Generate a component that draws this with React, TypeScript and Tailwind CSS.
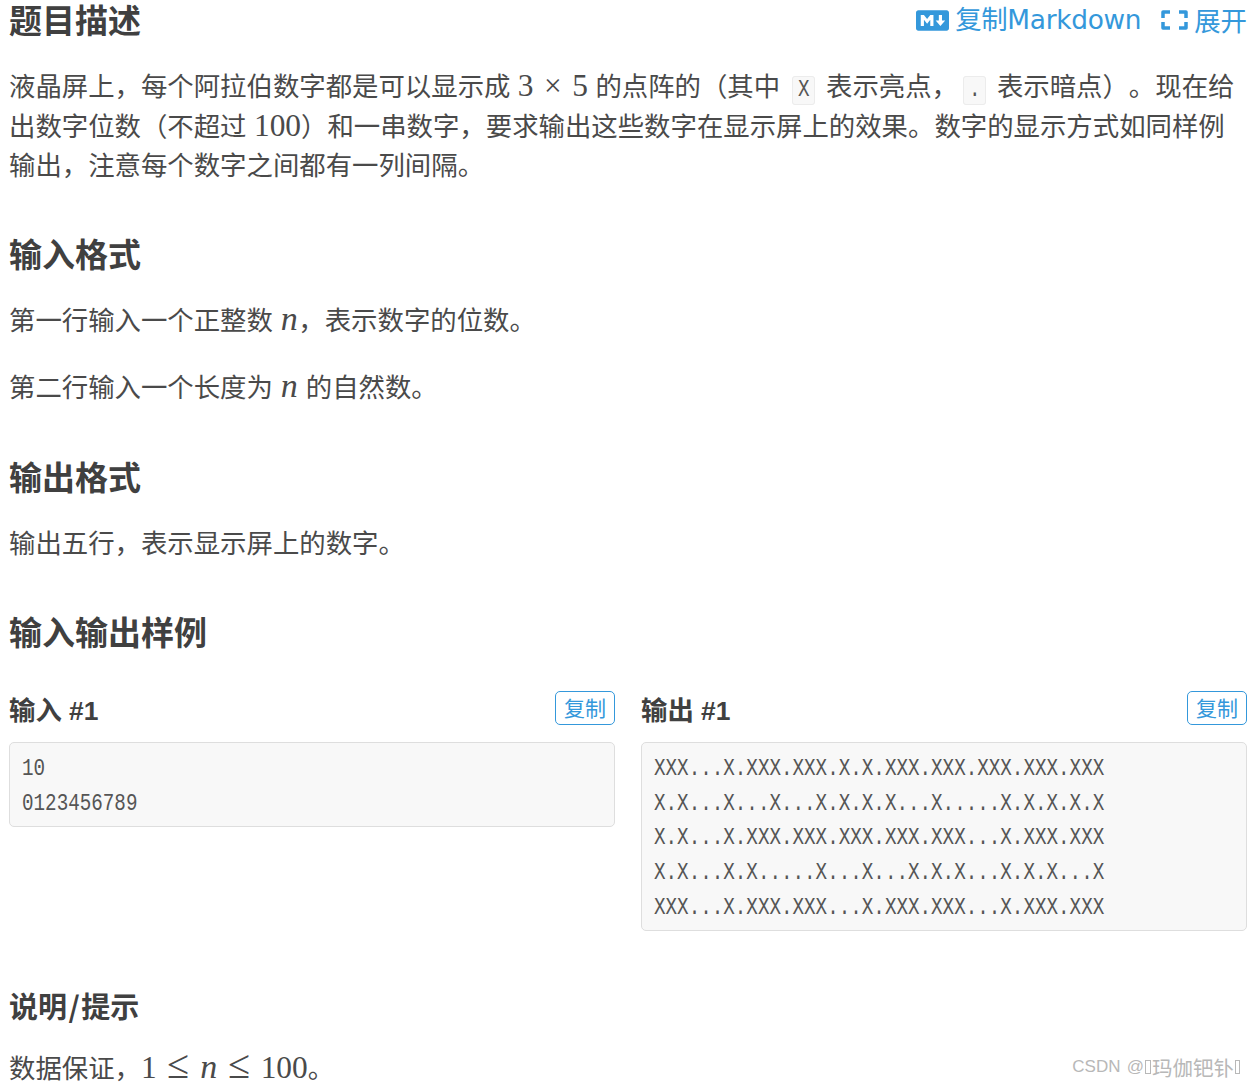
import type { ReactNode } from 'react'
import { FaMarkdown } from 'react-icons/fa'

const outputLines = [
  'XXX...X.XXX.XXX.X.X.XXX.XXX.XXX.XXX.XXX',
  'X.X...X...X...X.X.X.X...X.....X.X.X.X.X',
  'X.X...X.XXX.XXX.XXX.XXX.XXX...X.XXX.XXX',
  'X.X...X.X.....X...X...X.X.X...X.X.X...X',
  'XXX...X.XXX.XXX...X.XXX.XXX...X.XXX.XXX',
]

function Tex({ children }: { children: ReactNode }) {
  return <span className="font-['Liberation_Serif',serif] text-[31.4px] leading-none">{children}</span>
}

function Var() {
  return (
    <span className="inline-block w-[18px] text-center font-['Liberation_Serif',serif] text-[34px] leading-[20px] italic">
      n
    </span>
  )
}

function Leq() {
  return (
    <span className="mx-[10px] inline-block w-[23px] text-center font-['Liberation_Serif',serif] text-[40px] leading-[20px]">
      ≤
    </span>
  )
}

function Code({ children, className }: { children: string; className?: string }) {
  return (
    <code className={`mr-[11px] rounded-[3px] border border-[#ececec] bg-[#f8f8f8] px-[4.7px] py-[0.5px] font-['Liberation_Mono',monospace] text-[23.1px] leading-none text-[#555] ${className ?? ''}`}>
      <span className="inline-block w-[11.55px] origin-left scale-x-[0.833] leading-none">{children}</span>
    </code>
  )
}

function Heading({ children, className }: { children: ReactNode; className?: string }) {
  return <h2 className={`text-[33px] leading-[38px] font-bold text-[#404040] ${className ?? ''}`}>{children}</h2>
}

function Sample({ title, lines }: { title: string; lines: string[] }) {
  return (
    <div className="min-w-0">
      <div className="flex h-[46px] items-start justify-between">
        <h3 className="mt-[-5px] font-['Liberation_Sans','Noto_Sans_CJK_SC',sans-serif] text-[26.4px] leading-[40px] font-bold text-[#404040] [word-spacing:0px]">
          {title}
        </h3>
        <button className="mt-[-5px] h-[34px] w-[60px] rounded-[5px] border border-[#3498db] pb-[3px] text-[21px] leading-[28px] text-[#3498db]">
          复制
        </button>
      </div>
      <pre className="rounded-[5px] border border-[#dedede] bg-[#f8f8f8] px-[12px] pt-[9px] pb-[5px] font-['Liberation_Mono',monospace] text-[23.1px] leading-[34.65px] text-[#555]">
        {lines.map((line) => (
          <div key={line} className="h-[34.65px] origin-left scale-x-[0.833]">
            {line}
          </div>
        ))}
      </pre>
    </div>
  )
}

export default function App() {
  return (
    <div className="relative h-[1087px] w-[1253px] overflow-hidden bg-white pr-[6px] pl-[9px] font-['Noto_Sans_CJK_SC','DejaVu_Sans',sans-serif] text-[26.4px] leading-[39.6px] text-[#4a4a4a] [text-spacing-trim:space-all] [word-spacing:1.5px]">
      <div className="flex items-start justify-between">
        <Heading>题目描述</Heading>
        <div className="flex items-center text-[26.4px] leading-[40px] text-[#3498db]">
          <FaMarkdown className="mr-[6px] size-[33px]" />
          <span className="font-['DejaVu_Sans','Noto_Sans_CJK_SC',sans-serif] tracking-[-0.3px]">复制Markdown</span>
          <svg className="mr-[6px] ml-[20px] h-[20px] w-[27px]" viewBox="0 0 27 20" fill="none" stroke="currentColor" strokeWidth="3.5" strokeLinejoin="round">
            <path d="M2 8V2H9M18 2H25V8M2 12V18H9M18 18H25V12" />
          </svg>
          <span>展开</span>
        </div>
      </div>
      <p className="mt-[25px]">
        液晶屏上，每个阿拉伯数字都是可以显示成{' '}
        <Tex>
          3<span className="mx-[10.5px]">×</span>5
        </Tex>{' '}
        的点阵的（其中<Code className="ml-[12px]">X</Code>表示亮点，<Code className="ml-[5px]">.</Code>
        表示暗点）。现在给出数字位数（不超过 <Tex>100</Tex>）和一串数字，要求输出这些数字在显示屏上的效果。数字的显示方式如同样例输出，注意每个数字之间都有一列间隔。
      </p>
      <Heading className="mt-[50px]">输入格式</Heading>
      <p className="mt-[27px]">
        第一行输入一个正整数 <Var />，表示数字的位数。
      </p>
      <p className="mt-[27.5px]">
        第二行输入一个长度为 <Var /> 的自然数。
      </p>
      <Heading className="mt-[52px]">输出格式</Heading>
      <p className="mt-[27px]">输出五行，表示显示屏上的数字。</p>
      <Heading className="mt-[50px]">输入输出样例</Heading>
      <div className="mt-[46px] grid grid-cols-2 items-start gap-[26px]">
        <Sample title="输入 #1" lines={['10', '0123456789']} />
        <Sample title="输出 #1" lines={outputLines} />
      </div>
      <h3 className="mt-[55px] text-[29px] leading-[38px] font-bold text-[#404040]">
        说明<span className="mx-[1.5px]">/</span>提示
      </h3>
      <p className="mt-[23px]">
        数据保证，
        <Tex>1</Tex>
        <Leq />
        <Var />
        <Leq />
        <Tex>100</Tex>。
      </p>
      <div className="absolute top-[1053px] right-[13px] flex items-center font-['Liberation_Sans',sans-serif] text-[17px] leading-[28px] text-[#b8b8b8]">
        CSDN @
        <span className="mx-[1px] inline-block h-[14px] w-[6px] border border-[#b8b8b8]" />
        <span className="font-['Noto_Sans_CJK_SC',sans-serif] text-[20.5px]">玛伽钯钋</span>
        <span className="ml-[1px] inline-block h-[14px] w-[5px] border border-[#b8b8b8]" />
      </div>
    </div>
  )
}
